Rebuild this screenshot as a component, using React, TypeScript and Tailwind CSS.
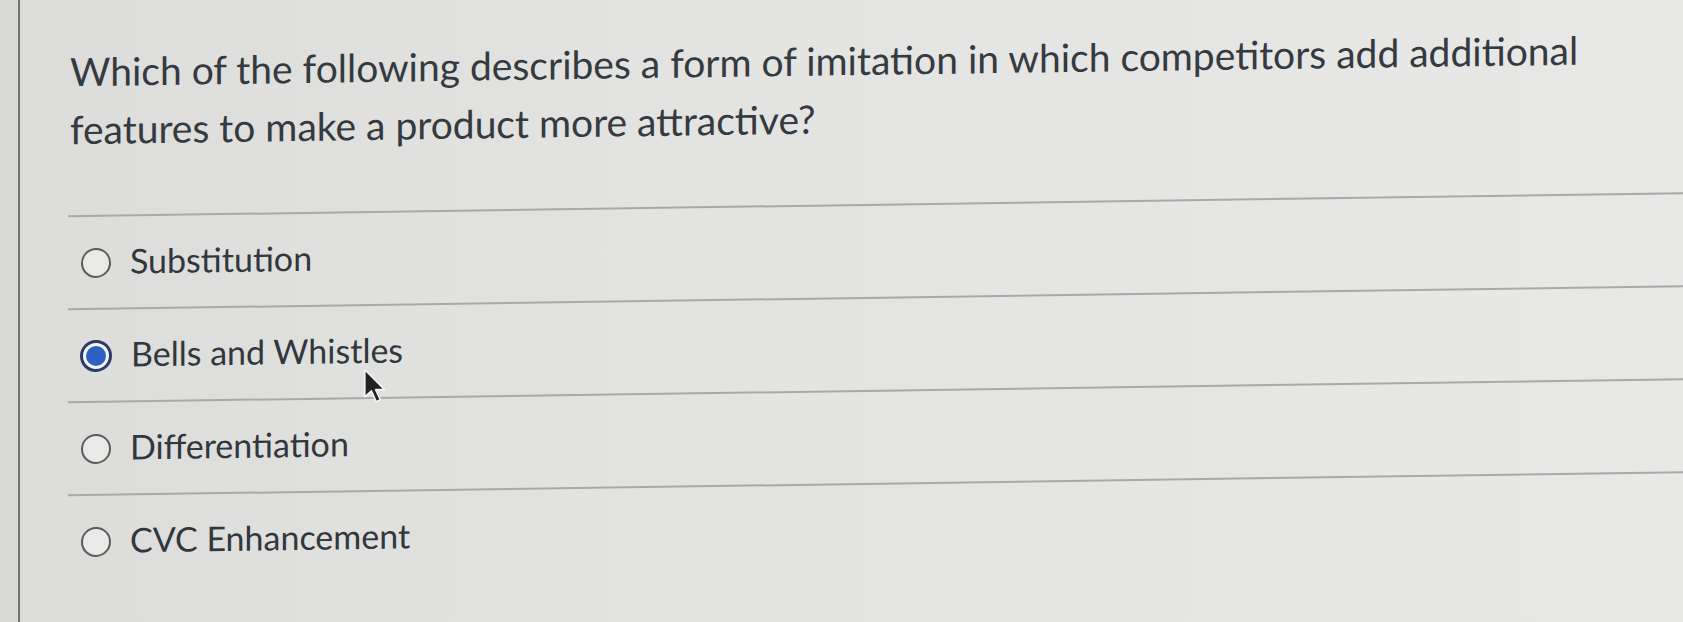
import React from "react";

const options = [
  { label: "Substitution", selected: false },
  { label: "Bells and Whistles", selected: true },
  { label: "Differentiation", selected: false },
  { label: "CVC Enhancement", selected: false },
];

export default function App() {
  return (
    <div className="relative w-[1683px] h-[622px] overflow-hidden bg-[linear-gradient(90deg,#dcdcda_0%,#e3e3e1_40%,#e8e8e7_100%)] font-['Lato','Noto_Sans',sans-serif]">
      <div className="flex h-full">
        <div className="w-[20px] shrink-0 border-r-2 border-[#727473] bg-[#d9d9d7]" />
        <div className="flex-1 min-w-0 origin-left -skew-y-[0.82deg] pl-[48px] pt-[43px]">
          <p className="pl-[2px] text-[39px] leading-[58px] text-[#343a40] whitespace-nowrap">
            Which of the following describes a form of imitation in which competitors add additional
            <br />
            features to make a product more attractive?
          </p>
          <ul className="mt-[57px]">
            {options.map((o) => (
              <li
                key={o.label}
                className="h-[93px] border-t-2 border-[#a9a9a9] flex items-center pl-[13px] gap-[19px]"
              >
                {o.selected ? (
                  <span className="w-[32px] h-[32px] -ml-[1px] rounded-full border-[3px] border-[#2b3a6a] bg-[#f4f4f4] flex items-center justify-center shrink-0">
                    <span className="w-[20px] h-[20px] rounded-full bg-[#2c62c3]" />
                  </span>
                ) : (
                  <span className="w-[30px] h-[30px] rounded-full border-2 border-[#5c5c5c] bg-[#e9e9e8] shrink-0" />
                )}
                <span className="text-[34px] leading-none text-[#31373d] -mt-[4px]">{o.label}</span>
              </li>
            ))}
          </ul>
        </div>
      </div>
      <svg
        className="absolute left-[363px] top-[368px]"
        width="24"
        height="36"
        viewBox="0 0 20 30"
      >
        <path
          d="M1.5 1.5 L1.5 24 L7 19 L11 28 L14.5 26.5 L10.5 18 L18 18 Z"
          fill="#1f2226"
          stroke="#f5f5f5"
          strokeWidth="1.3"
          strokeLinejoin="round"
        />
      </svg>
    </div>
  );
}
